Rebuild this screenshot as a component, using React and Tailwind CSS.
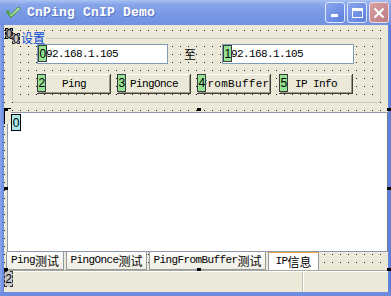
import clsx from "clsx";

const cjk = /([\u3400-\u9fff\uff00-\uffef]+)/;

// mixed text: latin in a narrow mono, CJK in Noto at 12px
const T = ({ children }) =>
  String(children)
    .split(cjk)
    .map((p, i) =>
      cjk.test(p) ? (
        <span
          key={i}
          className="font-['Noto_Sans_CJK_SC',sans-serif] text-[12px] tracking-normal"
        >
          {p}
        </span>
      ) : (
        <span key={i}>{p}</span>
      )
    );

const mono = "font-['Liberation_Mono',monospace] text-[11px] tracking-[-0.6px] text-black";

const Mark = ({ n, tone = "green", className = "" }) => (
  <span
    className={clsx(
      "absolute flex items-center justify-center text-[12px] leading-none text-black font-['Liberation_Sans',sans-serif]",
      tone === "green" && "bg-[#93e393] border border-[#3a3a3a]",
      tone === "cyan" && "bg-[#a9e9e9] border border-black",
      tone === "gray" && "bg-[#c6c6c6] border border-dashed border-[#333]",
      tone === "dark" && "bg-[#a9a9a9] border border-dashed border-black",
      className
    )}
  >
    {n}
  </span>
);

const Edit = ({ mark, className = "" }) => (
  <div
    className={clsx(
      "relative h-[20px] bg-white border border-[#7f9db9] flex items-center pl-[2px]",
      mono,
      className
    )}
  >
    192.168.1.105
    <Mark n={mark} className="left-0 top-0 w-[9px] h-[17px]" />
  </div>
);

const Btn = ({ mark, label, className = "", textClass = "" }) => (
  <div
    className={clsx(
      "relative h-[20px] w-[74px] flex items-center justify-center bg-[#ece9d8] shadow-[inset_-1px_-1px_#3f3e38,inset_1px_1px_#fff,inset_-2px_-2px_#9d9a8a]",
      mono,
      className
    )}
  >
    <span className={textClass}>{label}</span>
    <Mark n={mark} className="left-0 top-0 w-[9px] h-[18px]" />
  </div>
);

const Tab = ({ label, active, className = "" }) => (
  <div
    className={clsx(
      "flex items-center justify-center whitespace-nowrap border-x border-b border-[#919b9c]",
      active
        ? "h-[20px] -mt-[1px] bg-white border-t-[2px] border-t-[#e8a33c]"
        : "h-[18px] bg-[linear-gradient(to_bottom,#fcfcfb,#f0eee4)]",
      mono,
      className
    )}
  >
    <T>{label}</T>
  </div>
);

const Handle = ({ className }) => (
  <span className={clsx("absolute w-[4px] h-[3px] bg-black", className)} />
);

export default function App() {
  return (
    <div className="relative w-[391px] h-[296px] flex flex-col bg-[#7290e0] overflow-hidden">
      {/* title bar */}
      <div className="h-[25px] flex items-center pl-[5px] pr-[2px] bg-[linear-gradient(to_bottom,#a9c1f2_0%,#87a5ea_18%,#7a9ae5_50%,#7091e0_100%)]">
        <svg width="17" height="14" viewBox="0 0 17 14">
          <path d="M1 6 L6 12 L16 2 L13 1 L6 8 L3 4 Z" fill="#3f9b2f" />
          <path d="M3 5 L6 9 L13 2 L15 2.5 L6 10.5 Z" fill="#c9f0b0" />
        </svg>
        <span className="ml-[5px] font-['Liberation_Mono',monospace] font-bold text-[13px] text-white tracking-[0.2px] [text-shadow:1px_1px_#5672c4]">
          CnPing CnIP Demo
        </span>
        <div className="ml-auto flex gap-[2px] items-center">
          <div className="w-[20px] h-[21px] rounded-[3px] border border-[#dfe8fb] bg-[linear-gradient(135deg,#8aa6ee,#5d80df)] flex items-end pl-[5px] pb-[5px]">
            <span className="w-[7px] h-[3px] bg-white" />
          </div>
          <div className="w-[20px] h-[21px] rounded-[3px] border border-[#dfe8fb] bg-[linear-gradient(135deg,#8aa6ee,#5d80df)] flex items-center justify-center">
            <span className="w-[11px] h-[10px] border border-white border-t-[3px]" />
          </div>
          <div className="w-[20px] h-[21px] rounded-[3px] border border-[#f0dcdc] bg-[linear-gradient(135deg,#d8a0a4,#bd7c84)] flex items-center justify-center">
            <svg width="12" height="12" viewBox="0 0 12 12">
              <path d="M1.5 1.5 L10.5 10.5 M10.5 1.5 L1.5 10.5" stroke="#fff" strokeWidth="2.2" />
            </svg>
          </div>
        </div>
      </div>

      <div className="flex h-[267px]">
        <div className="w-[4px] bg-[linear-gradient(to_right,#8ba7ec,#6786dc)]" />
        <div className="relative w-[384px] flex flex-col bg-[#ece9d8] bg-[conic-gradient(from_270deg_at_1px_1px,#1a1a1a_90deg,transparent_0)] bg-[length:8px_8px] bg-[position:0px_5px]">
          {/* group box */}
          <div className="relative mt-[13px] ml-[8px] w-[369px] h-[65px] border border-[#cfcbb7] rounded-[4px] pt-[5px] pl-[24px]">
            <span className="absolute -top-[8px] left-[7px] px-[1px] bg-[#ece9d8] font-['Noto_Sans_CJK_SC',sans-serif] text-[12px] leading-[14px] text-[#0046d5]">
              设置
            </span>
            <div className="flex items-center">
              <Edit mark="0" className="w-[131px]" />
              <span className="ml-[16px] w-[13px] font-['Noto_Sans_CJK_SC',sans-serif] text-[12px] leading-none">
                至
              </span>
              <Edit mark="1" className="ml-[25px] w-[132px]" />
            </div>
            <div className="flex mt-[10px]">
              <Btn mark="2" label="Ping" />
              <Btn mark="3" label="PingOnce" className="ml-[6px]" />
              <Btn mark="4" label="FromBuffer" className="ml-[6px]" textClass="tracking-[0.3px] ml-[2px]" />
              <Btn mark="5" label="IP Info" className="ml-[8px]" />
            </div>
          </div>

          {/* memo */}
          <div className="relative mt-[9px] ml-[3px] w-[381px] h-[140px] bg-white border border-[#8f98a8] border-r-[#6f7a8c]">
            <Mark n="0" tone="cyan" className="left-[3px] top-[1px] w-[10px] h-[17px]" />
          </div>

          {/* tabs */}
          <div className="flex items-start h-[18px] ml-[2px] gap-[2px]">
            <Tab label="Ping测试" className="w-[58px]" />
            <Tab label="PingOnce测试" className="w-[81px]" />
            <Tab label="PingFromBuffer测试" className="w-[117px]" />
            <Tab label="IP信息" active className="w-[51px]" />
          </div>
          <div className="h-[2px] border-t border-[#aca899] bg-white" />

          {/* status bar */}
          <div className="relative flex-1 flex bg-[#ece9d8]">
            <div className="w-[299px] border-r border-[#c5c2b2]" />
            <div className="w-[1px] bg-white" />
            <Mark n="2" tone="gray" className="left-0 -top-[1px] w-[9px] h-[16px]" />
          </div>

          {/* design-time markers for the group box and page control */}
          <Mark n="0" tone="dark" className="left-[1px] top-[3px] w-[8px] h-[11px] text-[11px]" />
          <Mark n="0" tone="gray" className="left-[8px] top-[8px] w-[8px] h-[11px] text-[11px]" />
          <span className="absolute left-[0px] top-[83px] w-[7px] h-[16px] bg-[#ece9d8] border-l border-t border-black" />
        </div>
        <div className="w-[3px] bg-[linear-gradient(to_right,#6786dc,#5a79d4)]" />
      </div>
      <div className="h-[4px] bg-[#6d8cde]" />

      {/* selection handles */}
      <Handle className="left-[4px] top-[108px]" />
      <Handle className="left-[197px] top-[108px]" />
      <Handle className="left-[387px] top-[108px]" />
      <Handle className="left-[4px] top-[187px]" />
      <Handle className="left-[387px] top-[187px]" />
      <Handle className="left-[4px] top-[268px]" />
      <Handle className="left-[197px] top-[268px]" />
      <Handle className="left-[387px] top-[268px]" />
    </div>
  );
}
